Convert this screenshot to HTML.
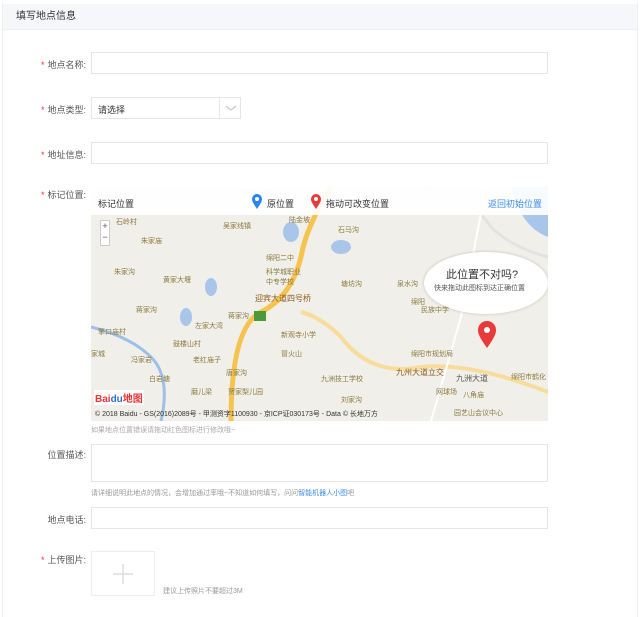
<!DOCTYPE html>
<html><head><meta charset="utf-8"><style>
*{margin:0;padding:0;box-sizing:border-box}
body{width:640px;height:617px;background:#fff;font-family:"Liberation Sans","Noto Sans CJK SC",sans-serif;font-size:9px;color:#555;position:relative;overflow:hidden}
.frame{position:absolute;left:2px;top:3px;width:636px;height:614px;border-left:1px solid #eee;border-right:1px solid #eee}
.hdr{position:absolute;left:3px;top:4px;width:634px;height:26px;background:#f5f7fa;border-bottom:1px solid #edf0f4;font-size:10px;color:#333;line-height:26px;padding-left:13px}
.lbl{position:absolute;right:554px;font-size:9px;color:#555;white-space:nowrap}
.lbl b{color:#e33;font-weight:normal;margin-right:3px}
.inp{position:absolute;left:91px;width:457px;border:1px solid #e6e6e6;background:#fff}
.a{position:absolute;white-space:nowrap}
.m{position:absolute;font-size:7px;color:#8a7a40;white-space:nowrap}
</style></head><body>
<div class="frame"></div>
<div class="hdr">填写地点信息</div>

<div class="lbl" style="top:58px"><b>*</b>地点名称:</div>
<div class="inp" style="top:52px;height:22px"></div>

<div class="lbl" style="top:103px"><b>*</b>地点类型:</div>
<div class="inp" style="top:97px;height:22px;width:150px"><span class="a" style="left:6px;top:5px;color:#333">请选择</span><div class="a" style="left:127px;top:0;height:20px;border-left:1px solid #e6e6e6;width:22px"><svg width="22" height="20"><path d="M6 8 L11 12 L16 8" fill="none" stroke="#bbb"/></svg></div></div>

<div class="lbl" style="top:148px"><b>*</b>地址信息:</div>
<div class="inp" style="top:142px;height:22px"></div>

<div class="lbl" style="top:188px"><b>*</b>标记位置:</div>
<div class="a" style="left:91px;top:187px;width:457px;height:234px;background:#f1efe9;overflow:hidden">
<svg width="457" height="234" style="position:absolute;left:0;top:0">
<path d="M0 140 Q40 150 60 170 Q80 190 70 234" fill="none" stroke="#9cc0e8" stroke-width="3"/>
<path d="M335 0 Q380 10 400 40 Q420 60 457 70" fill="none" stroke="#e3e3e3" stroke-width="3"/>
<path d="M420 0 Q430 40 457 50 L457 0Z" fill="#a9c6ea"/>
<path d="M240 0 Q215 40 210 70 Q200 110 170 125 Q140 140 140 234" fill="none" stroke="#f6c34f" stroke-width="5"/>
<path d="M210 125 Q230 130 250 150 Q280 190 330 180 Q380 175 457 205" fill="none" stroke="#f7dc9c" stroke-width="4"/>
<ellipse cx="200" cy="45" rx="8" ry="10" fill="#a9c6ea"/><ellipse cx="250" cy="60" rx="10" ry="7" fill="#a9c6ea"/>
<ellipse cx="120" cy="100" rx="6" ry="9" fill="#a9c6ea"/><ellipse cx="95" cy="130" rx="6" ry="9" fill="#a9c6ea"/>
<path d="M395 0 L370 130 L340 234" fill="none" stroke="#fff" stroke-width="2"/>
<rect x="163" y="124" width="12" height="10" fill="#4a9a3a"/>
</svg>
<div class="a" style="left:0;top:0;width:457px;height:28px;background:rgba(255,255,255,.92)"></div>
<span class="a" style="left:7px;top:10px;color:#333">标记位置</span>
<svg class="a" style="left:160px;top:6px" width="12" height="17"><path d="M6 16 C2 10 1 8 1 6 A5 5 0 0 1 11 6 C11 8 10 10 6 16Z" fill="#2c84f0"/><circle cx="6" cy="6" r="2" fill="#fff"/></svg>
<span class="a" style="left:176px;top:10px;color:#333">原位置</span>
<svg class="a" style="left:219px;top:6px" width="12" height="17"><path d="M6 16 C2 10 1 8 1 6 A5 5 0 0 1 11 6 C11 8 10 10 6 16Z" fill="#e93a3a"/><circle cx="6" cy="6" r="2" fill="#fff"/></svg>
<span class="a" style="left:235px;top:10px;color:#333">拖动可改变位置</span>
<span class="a" style="left:397px;top:10px;color:#3b8ee8">返回初始位置</span>
<div class="a" style="left:9px;top:33px;width:10px;height:26px;background:#fff;border:1px solid #ccc;font-size:9px;line-height:11px;text-align:center;color:#555">+<br>−</div>
<span class="m" style="left:25px;top:30px">石岭村</span><span class="m" style="left:132px;top:34px">吴家线镇</span><span class="m" style="left:198px;top:28px">陆金坡</span>
<span class="m" style="left:247px;top:38px">石马沟</span><span class="m" style="left:50px;top:49px">朱家庙</span><span class="m" style="left:175px;top:66px">绵阳二中</span>
<span class="m" style="left:23px;top:80px">朱家沟</span><span class="m" style="left:72px;top:88px">黄家大堰</span><span class="m" style="left:175px;top:80px">科学城职业<br>中专学校</span>
<span class="m" style="left:250px;top:92px">塘坊沟</span><span class="m" style="left:306px;top:92px">泉水沟</span><span class="m" style="left:320px;top:110px">绵阳</span>
<span class="m" style="left:330px;top:118px">民族中学</span>
<span class="m" style="left:164px;top:106px;color:#8a5a1a;font-size:8px">迎宾大道四号桥</span>
<span class="m" style="left:45px;top:118px">蒋家沟</span><span class="m" style="left:137px;top:124px">蒋家沟</span><span class="m" style="left:104px;top:134px">左家大湾</span>
<span class="m" style="left:7px;top:140px">擎口庙村</span><span class="m" style="left:190px;top:143px">新观寺小学</span><span class="m" style="left:82px;top:152px">鼓楼山村</span>
<span class="m" style="left:190px;top:162px">冒火山</span><span class="m" style="left:0px;top:162px">家城</span><span class="m" style="left:40px;top:168px">冯家岩</span><span class="m" style="left:102px;top:168px">老红庙子</span>
<span class="m" style="left:320px;top:162px">绵阳市规划局</span><span class="m" style="left:305px;top:180px;color:#8a5a1a;font-size:8px">九州大道立交</span>
<span class="m" style="left:58px;top:187px">白岩塘</span><span class="m" style="left:135px;top:181px">唐家沟</span><span class="m" style="left:230px;top:187px">九洲技工学校</span>
<span class="m" style="left:365px;top:186px;color:#555;font-size:8px">九洲大道</span><span class="m" style="left:420px;top:185px">绵阳市鹤化</span>
<span class="m" style="left:100px;top:200px">磨儿梁</span><span class="m" style="left:137px;top:200px">贺家梨儿园</span><span class="m" style="left:345px;top:200px">网球场</span><span class="m" style="left:372px;top:203px">八角庙</span>
<span class="m" style="left:250px;top:208px">刘家沟</span><span class="m" style="left:363px;top:221px">园艺山会议中心</span>
<div class="a" style="left:333px;top:65px;width:124px;height:62px;background:#fff;border-radius:50%;box-shadow:0 0 3px rgba(0,0,0,.2)"></div>
<span class="a" style="left:355px;top:79px;font-size:11px;color:#333">此位置不对吗?</span>
<span class="a" style="left:343px;top:96px;font-size:7px;color:#555">快来拖动此图标到达正确位置</span>
<svg class="a" style="left:386px;top:133px" width="20" height="30"><path d="M10 28 C3 18 1 14 1 10 A9 9 0 0 1 19 10 C19 14 17 18 10 28Z" fill="#e93a3a"/><circle cx="10" cy="10" r="3" fill="#fff"/></svg>
<span class="a" style="left:3px;top:203px;font-size:10px;font-weight:bold;color:#e33;background:#fff;padding:0 1px">Bai<span style="color:#2c6fd6">du</span>地图</span>
<span class="a" style="left:4px;top:222px;font-size:7px;color:#333">© 2018 Baidu - GS(2016)2089号 - 甲测资字1100930 - 京ICP证030173号 - Data © 长地万方</span>
</div>
<span class="a" style="left:91px;top:425px;font-size:7px;color:#aaa">如果地点位置错误请拖动红色图标进行修改哦~</span>

<div class="lbl" style="top:448px">位置描述:</div>
<div class="inp" style="top:444px;height:38px"></div>
<span class="a" style="left:91px;top:488px;font-size:7px;color:#999">请详细说明此地点的情况，会增加通过率哦~不知道如何填写，问问<span style="color:#3b8ee8">智能机器人小图</span>吧</span>

<div class="lbl" style="top:513px">地点电话:</div>
<div class="inp" style="top:507px;height:22px"></div>

<div class="lbl" style="top:553px"><b>*</b>上传图片:</div>
<div class="a" style="left:91px;top:551px;width:64px;height:45px;border:1px solid #eee"><svg width="62" height="43"><path d="M31 12 V32 M21 22 H41" stroke="#ddd" stroke-width="1.5"/></svg></div>
<span class="a" style="left:163px;top:586px;font-size:7px;color:#999">建议上传照片不要超过3M</span>
</body></html>
